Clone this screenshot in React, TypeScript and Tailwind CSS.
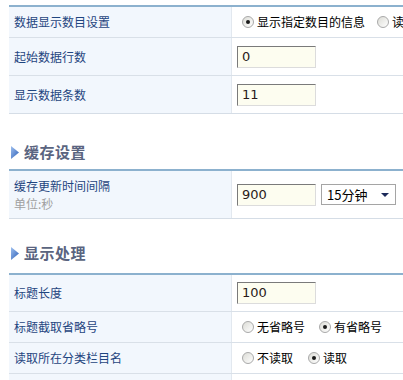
import React from 'react';

const cjk = { fontFamily: '"Noto Sans CJK SC", "Noto Sans", sans-serif' };

const Radio = ({ checked }: { checked?: boolean }) => (
  <span className="relative inline-flex items-center justify-center w-[12px] h-[12px] rounded-full border border-[#a9a9a9] bg-gradient-to-br from-[#dcdcd6] to-white shrink-0">
    {checked && <span className="w-[4px] h-[4px] rounded-full bg-[#1a1a1a]" />}
  </span>
);

const Choice = ({ checked, label, className }: { checked?: boolean; label: string; className?: string }) => (
  <label className={`flex items-center gap-[3px] ${className ?? ''}`}>
    <Radio checked={checked} />
    <span className="text-[12px] text-black whitespace-nowrap">{label}</span>
  </label>
);

const TextInput = ({ value }: { value: string }) => (
  <div
    className="w-[79px] h-[22px] flex items-center pl-[4px] bg-[#fdfdf0] border border-t-[#7a7a7a] border-l-[#7a7a7a] border-b-[#dcdcdc] border-r-[#dcdcdc] text-[13px] text-[#2a1a1a]"
    style={{ fontFamily: '"DejaVu Sans", Verdana, sans-serif' }}
  >
    {value}
  </div>
);

const Row = ({
  label,
  sub,
  h,
  last,
  children,
}: {
  label?: string;
  sub?: string;
  h: string;
  last?: boolean;
  children?: React.ReactNode;
}) => (
  <div className={`flex ${h} ${last ? '' : 'border-b border-[#d9e0e8]'}`}>
    <div className="w-[223px] shrink-0 bg-[#f2f7fd] border-r border-[#e2e8ef] pl-[5px] flex flex-col justify-center">
      {label && <span className="text-[12px] leading-[18px] text-[#1f4580]">{label}</span>}
      {sub && <span className="text-[12px] leading-[18px] text-[#a0a0a0]">{sub}</span>}
    </div>
    <div className="flex-1 bg-white pl-[5px] flex items-center">{children}</div>
  </div>
);

const Table = ({ children, className }: { children: React.ReactNode; className?: string }) => (
  <div className={`w-[620px] border-t-2 border-[#8cb1ce] border-b border-b-[#d5dde6] ${className ?? ''}`}>
    {children}
  </div>
);

const Heading = ({ title, className }: { title: string; className?: string }) => (
  <div className={`flex items-center h-[20px] ${className ?? ''}`}>
    <svg width="8" height="13" viewBox="0 0 8 13" className="ml-[2px] mr-[5px]">
      <defs>
        <linearGradient id="tri" x1="0" y1="0" x2="1" y2="1">
          <stop offset="0" stopColor="#9fc0ef" />
          <stop offset="1" stopColor="#2c5fb8" />
        </linearGradient>
      </defs>
      <path d="M0 0 L8 6.5 L0 13 Z" fill="url(#tri)" />
    </svg>
    <span className="text-[15px] font-bold text-[#5a6480] tracking-[0.5px]">{title}</span>
  </div>
);

export default function App() {
  return (
    <div className="w-[403px] h-[380px] overflow-hidden bg-white pl-[9px] pt-[5px]" style={cjk}>
      <Table>
        <Row label="数据显示数目设置" h="h-[31px]">
          <Choice checked label="显示指定数目的信息" className="ml-[5px]" />
          <Choice label="读取全部信息" className="ml-[12px]" />
        </Row>
        <Row label="起始数据行数" h="h-[38px]">
          <TextInput value="0" />
        </Row>
        <Row label="显示数据条数" h="h-[37px]" last>
          <TextInput value="11" />
        </Row>
      </Table>

      <Heading title="缓存设置" className="mt-[28px]" />

      <Table className="mt-[7px]">
        <Row label="缓存更新时间间隔" sub="单位:秒" h="h-[47px]" last>
          <TextInput value="900" />
          <div className="ml-[5px] w-[75px] h-[21px] border border-[#a5a5a5] bg-white flex items-center justify-between pl-[5px] pr-[6px] text-[13px] text-black">
            <span>15分钟</span>
            <svg width="8" height="4" viewBox="0 0 8 4">
              <path d="M0 0 H8 L4 4 Z" fill="#1c2a5a" />
            </svg>
          </div>
        </Row>
      </Table>

      <Heading title="显示处理" className="mt-[24px]" />

      <Table className="mt-[10px]">
        <Row label="标题长度" h="h-[37px]">
          <TextInput value="100" />
        </Row>
        <Row label="标题截取省略号" h="h-[31px]">
          <Choice label="无省略号" className="ml-[5px]" />
          <Choice checked label="有省略号" className="ml-[14px]" />
        </Row>
        <Row label="读取所在分类栏目名" h="h-[31px]">
          <Choice label="不读取" className="ml-[5px]" />
          <Choice checked label="读取" className="ml-[15px]" />
        </Row>
        <Row h="h-[31px]" last />
      </Table>
    </div>
  );
}
